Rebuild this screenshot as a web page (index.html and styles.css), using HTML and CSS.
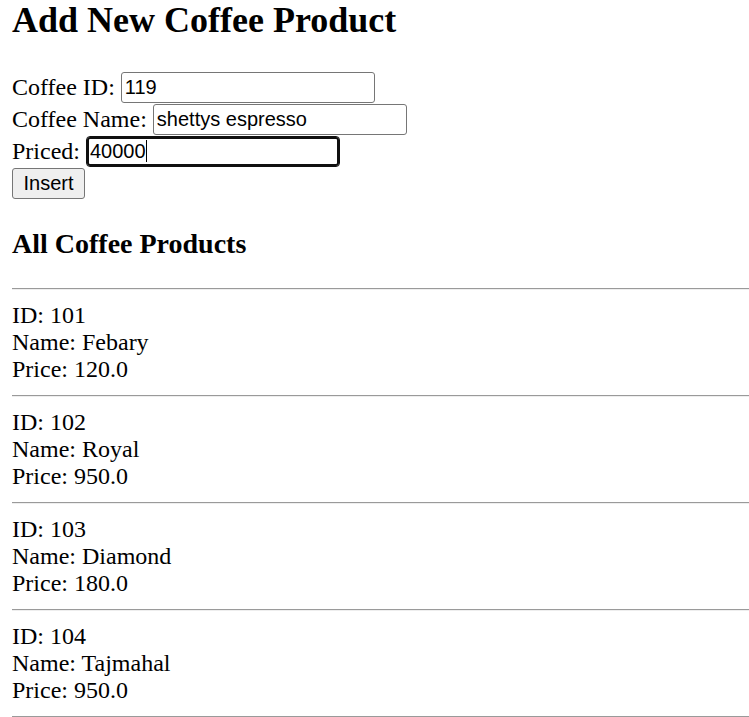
FILE: index.html
```html
<!DOCTYPE html>
<html lang="en">
<head>
<meta charset="utf-8">
<title>Add New Coffee Product</title>
<link rel="stylesheet" href="styles.css">
</head>
<body>
  <h1 class="title">Add New Coffee Product</h1>
  <form class="coffee-form">
    <div class="row">
      <label for="cid">Coffee ID:</label>
      <input class="field" id="cid" type="text" value="119">
    </div>
    <div class="row">
      <label for="cname">Coffee Name:</label>
      <input class="field" id="cname" type="text" value="shettys espresso">
    </div>
    <div class="row">
      <label for="cprice">Priced:</label>
      <span class="field-wrap">
        <input class="field focused" id="cprice" type="text" value="40000">
        <span class="caret"></span>
      </span>
    </div>
    <div class="row">
      <button class="btn" type="button">Insert</button>
    </div>
  </form>

  <h2 class="subtitle">All Coffee Products</h2>
  <div class="list">
    <hr class="rule">
    <div class="product">ID: 101<br>Name: Febary<br>Price: 120.0</div>
    <hr class="rule">
    <div class="product">ID: 102<br>Name: Royal<br>Price: 950.0</div>
    <hr class="rule">
    <div class="product">ID: 103<br>Name: Diamond<br>Price: 180.0</div>
    <hr class="rule">
    <div class="product">ID: 104<br>Name: Tajmahal<br>Price: 950.0</div>
    <hr class="rule">
  </div>
</body>
</html>
```
FILE: styles.css
```css
html {
  overflow: hidden;
  background: #ffffff;
}

body {
  margin: 0;
  padding: 0 0 0 12px;
  font-family: "Liberation Serif", "Times New Roman", serif;
  font-size: 24px;
  line-height: 27px;
  color: #000000;
}

.title {
  margin: 0 0 30px 0;
  font-size: 36px;
  line-height: 41px;
  font-weight: bold;
}

.coffee-form {
  margin: 0;
  display: flex;
  flex-direction: column;
}

.row {
  height: 32px;
  display: flex;
  align-items: center;
  gap: 6px;
}

.row label {
  line-height: 27px;
  white-space: nowrap;
}

.field-wrap {
  position: relative;
  display: inline-flex;
}

.field {
  box-sizing: border-box;
  width: 254px;
  height: 31px;
  margin: 0;
  padding: 1px 3px;
  border: 1px solid #767676;
  border-radius: 3px;
  background: #ffffff;
  font-family: "Liberation Sans", Arial, sans-serif;
  font-size: 20px;
  color: #000000;
  outline: none;
}

.field.focused {
  border-color: #101010;
  border-radius: 4px;
  box-shadow: inset 0 0 0 2px #101010;
}

.caret {
  position: absolute;
  left: 60px;
  top: 4px;
  width: 1px;
  height: 22px;
  background: #000000;
}

.btn {
  box-sizing: border-box;
  width: 73px;
  height: 31px;
  margin: 0;
  padding: 0 10px;
  border: 1px solid #767676;
  border-radius: 3px;
  background: #efefef;
  font-family: "Liberation Sans", Arial, sans-serif;
  font-size: 20px;
  color: #000000;
}

.subtitle {
  margin: 29px 0 28px 0;
  font-size: 28px;
  line-height: 32px;
  font-weight: bold;
}

.list {
  display: flex;
  flex-direction: column;
}

.rule {
  margin: 12px 0;
  height: 0;
  border: 0;
  border-top: 1px solid #9a9a9a;
  border-bottom: 1px solid #eeeeee;
}

.rule:first-child {
  margin-top: 0;
}

.product {
  line-height: 27px;
}
```
